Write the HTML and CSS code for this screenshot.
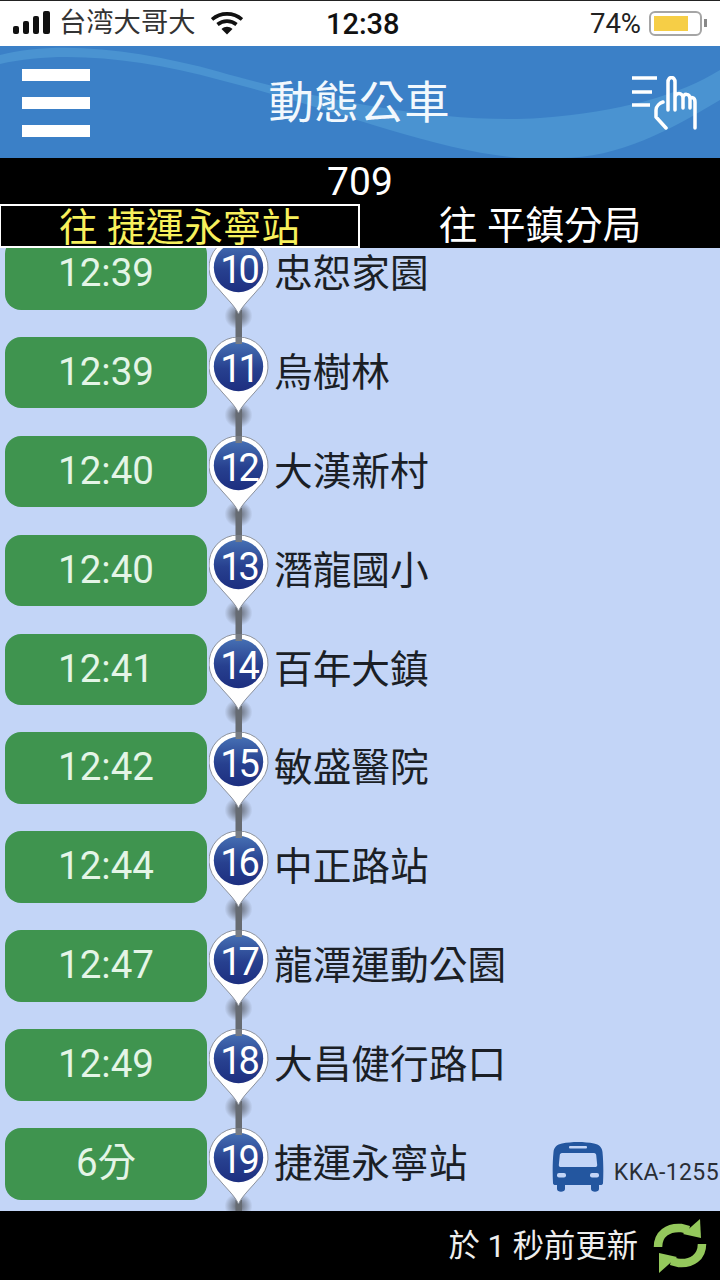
FILE: index.html
```html
<!DOCTYPE html>
<html lang="zh-Hant">
<head>
  <meta charset="UTF-8" />
  <meta name="viewport" content="width=device-width, initial-scale=1.0"/>
  <title>動態公車</title>
  <link rel="stylesheet" href="styles.css">
</head>
<body>
  <svg class="defs" width="0" height="0">
    <defs>
      <linearGradient id="pin-blue" x1="0" y1="0" x2="0" y2="1">
        <stop offset="0" stop-color="#4670b4"/>
        <stop offset="0.55" stop-color="#27408f"/>
        <stop offset="1" stop-color="#1d2f80"/>
      </linearGradient>
      <radialGradient id="pin-shadow">
        <stop offset="0" stop-color="#333" stop-opacity="0.7"/>
        <stop offset="0.6" stop-color="#333" stop-opacity="0.3"/>
        <stop offset="1" stop-color="#333" stop-opacity="0"/>
      </radialGradient>
      <g id="pin-body">
        <ellipse cx="29.5" cy="78" rx="14" ry="13" fill="url(#pin-shadow)"/>
        <rect x="26.5" y="72" width="6.5" height="38" fill="#666b72"/>
        <path d="M29.5 76 C26 68 17 60 10.500 52 A29.500 29.500 0 1 1 48.500 52 C42 60 33 68 29.5 76Z" fill="#fff" stroke="#8b919c" stroke-width="1"/>
        <circle cx="29.5" cy="29.5" r="24.7" fill="url(#pin-blue)"/>
        <rect x="26.5" y="0" width="6.5" height="7" fill="#777c84"/>
      </g>
    </defs>
  </svg>

  <div class="status-bar">
    <div class="status-left">
      <svg class="signal" width="38" height="24" viewBox="0 0 38 24">
        <rect x="0" y="15" width="6" height="8" rx="2"/>
        <rect x="10" y="10" width="6" height="13" rx="2"/>
        <rect x="20" y="5" width="6" height="18" rx="2"/>
        <rect x="30" y="0" width="7" height="23" rx="2"/>
      </svg>
      <span class="carrier">台湾大哥大</span>
      <svg class="wifi" width="32" height="24" viewBox="0 0 32 24">
        <path d="M1 8.5C9.500 1 22.500 1 31 8.500" fill="none" stroke="#111" stroke-width="3.600"/>
        <path d="M6.500 13.500C12 9 20 9 25.500 13.500" fill="none" stroke="#111" stroke-width="3.600"/>
        <path d="M10.500 18L16 23.500 21.500 18C18 15 14 15 10.500 18Z" fill="#111"/>
      </svg>
    </div>
    <span class="clock">12:38</span>
    <div class="status-right">
      <span class="percent">74%</span>
      <div class="battery"><div class="battery-fill"></div></div>
      <div class="battery-nub"></div>
    </div>
  </div>

  <header class="app-header">
    <svg class="header-wave" width="720" height="112" viewBox="0 46 720 112">
      <path d="M0 55C60 40 140 50 220 72C300 95 440 125 540 118C620 112 680 95 720 70L720 100C670 130 620 158 560 158L520 158C430 150 340 110 220 80C140 58 60 50 0 64Z" fill="#4a93d1"/>
    </svg>
    <button class="menu-btn" aria-label="menu">
      <span></span><span></span><span></span>
    </button>
    <h1 class="title">動態公車</h1>
    <svg class="hand-icon" width="68" height="56" viewBox="630 76 68 56" fill="none" stroke="#fff" stroke-width="3.500" stroke-linecap="round" stroke-linejoin="round">
      <path d="M632 78H657M632 92H652M632 105H650" stroke-width="3.500" stroke-linecap="butt"/>
      <path d="M666 128L656 117V110C656 106 660 103 663 102M668 110V82C668 76 675 76 675 82V110M675 98C675 92 683 92 683 98V108M683 98C683 93 690 93 690 99V108M690 100C690 96 695 97 695 102V128"/>
    </svg>
  </header>

  <div class="route-bar">
    <div class="route-no">709</div>
    <div class="tabs">
      <div class="tab tab-active">往 捷運永寧站</div>
      <div class="tab">往 平鎮分局</div>
    </div>
  </div>

  <main class="stop-list">
    <div class="stop-rows">
      <div class="stop"><div class="eta">12:39</div><svg class="pin" width="60" height="110" viewBox="0 0 60 110"><use href="#pin-body"/><text x="29.500" y="44.500">10</text></svg><div class="stop-name">忠恕家園</div></div>
      <div class="stop"><div class="eta">12:39</div><svg class="pin" width="60" height="110" viewBox="0 0 60 110"><use href="#pin-body"/><text x="29.500" y="44.500">11</text></svg><div class="stop-name">烏樹林</div></div>
      <div class="stop"><div class="eta">12:40</div><svg class="pin" width="60" height="110" viewBox="0 0 60 110"><use href="#pin-body"/><text x="29.500" y="44.500">12</text></svg><div class="stop-name">大漢新村</div></div>
      <div class="stop"><div class="eta">12:40</div><svg class="pin" width="60" height="110" viewBox="0 0 60 110"><use href="#pin-body"/><text x="29.500" y="44.500">13</text></svg><div class="stop-name">潛龍國小</div></div>
      <div class="stop"><div class="eta">12:41</div><svg class="pin" width="60" height="110" viewBox="0 0 60 110"><use href="#pin-body"/><text x="29.500" y="44.500">14</text></svg><div class="stop-name">百年大鎮</div></div>
      <div class="stop"><div class="eta">12:42</div><svg class="pin" width="60" height="110" viewBox="0 0 60 110"><use href="#pin-body"/><text x="29.500" y="44.500">15</text></svg><div class="stop-name">敏盛醫院</div></div>
      <div class="stop"><div class="eta">12:44</div><svg class="pin" width="60" height="110" viewBox="0 0 60 110"><use href="#pin-body"/><text x="29.500" y="44.500">16</text></svg><div class="stop-name">中正路站</div></div>
      <div class="stop"><div class="eta">12:47</div><svg class="pin" width="60" height="110" viewBox="0 0 60 110"><use href="#pin-body"/><text x="29.500" y="44.500">17</text></svg><div class="stop-name">龍潭運動公園</div></div>
      <div class="stop"><div class="eta">12:49</div><svg class="pin" width="60" height="110" viewBox="0 0 60 110"><use href="#pin-body"/><text x="29.500" y="44.500">18</text></svg><div class="stop-name">大昌健行路口</div></div>
      <div class="stop">
        <div class="eta">6分</div>
        <svg class="pin" width="60" height="110" viewBox="0 0 60 110"><use href="#pin-body"/><text x="29.500" y="44.500">19</text></svg>
        <div class="stop-name">捷運永寧站</div>
        <div class="bus">
          <svg width="52" height="50" viewBox="0 0 52 50">
            <path fill-rule="evenodd" fill="#23569f" d="M10 1.500C20 -0.500 32 -0.500 42 1.500C47 2.500 50 5 50.500 10C51.500 20 51.500 32 51 41C51 42.500 50 43 48.500 43H47V47C47 50.500 39 50.500 39 47V43H13V47C13 50.500 5 50.500 5 47V43H3.500C2 43 1 42.500 1 41C0.500 32 0.500 20 1.500 10C2 5 5 2.500 10 1.500ZM10 11C8.500 11 8 12 7.800 13L6.800 23C6.800 24.500 7.500 25 9 25H43C44.500 25 45.200 24.500 45.200 23L44.200 13C44 12 43.500 11 42 11Z"/>
            <rect x="17" y="4" width="18" height="2.500" rx="1" fill="#c3d5f7"/>
            <rect x="5" y="31" width="9" height="4.500" rx="2" fill="#c3d5f7"/>
            <rect x="38" y="31" width="9" height="4.500" rx="2" fill="#c3d5f7"/>
          </svg>
          <span class="plate">KKA-1255</span>
        </div>
      </div>
    </div>
  </main>

  <footer class="update-bar">
    <span class="update-text">於 1 秒前更新</span>
    <svg class="refresh" width="54" height="54" viewBox="0 0 54 54" fill="none">
      <path d="M5 28C5 15 15 8 28 9L36 11" stroke="#94c85c" stroke-width="8.500"/>
      <path d="M30 15L47 0 48 19Z" fill="#94c85c"/>
      <path d="M49 25C49 38 39 45 26 44L18 42" stroke="#94c85c" stroke-width="8.500"/>
      <path d="M24 38L6 54 6 34Z" fill="#94c85c"/>
    </svg>
  </footer>
</body>
</html>
```

FILE: styles.css
```css
* {
  box-sizing: border-box;
}

body {
  margin: 0;
  width: 720px;
  height: 1280px;
  display: flex;
  flex-direction: column;
  overflow: hidden;
  background: #000;
  font-family: Roboto, "Noto Sans CJK TC", sans-serif;
}

.defs {
  position: absolute;
}

/* status bar */
.status-bar {
  height: 46px;
  flex: none;
  display: flex;
  align-items: center;
  justify-content: space-between;
  padding: 1px 13px 2px 13px;
  border-top: 1px solid #222;
  background: #fff;
  color: #222;
  position: relative;
}

.status-left,
.status-right {
  display: flex;
  align-items: center;
}

.signal {
  fill: #111;
}

.carrier {
  font-size: 27.3px;
  line-height: 36px;
  margin-left: 8px;
  color: #333;
}

.wifi {
  margin-left: 16px;
}

.clock {
  font-size: 29px;
  font-weight: 500;
  color: #111;
  position: absolute;
  left: 326px;
  top: 6px;
}

.percent {
  font-size: 27.5px;
}

.battery {
  width: 53px;
  height: 25px;
  margin-left: 8px;
  padding: 3px;
  border: 2px solid #a5a5a5;
  border-radius: 6px;
}

.battery-fill {
  width: 34px;
  height: 100%;
  background: #f6ce46;
}

.battery-nub {
  width: 3px;
  height: 8px;
  margin-left: 2px;
  background: #888;
}

/* blue header */
.app-header {
  height: 112px;
  flex: none;
  display: flex;
  align-items: center;
  justify-content: center;
  background: #3b80c7;
  position: relative;
  overflow: hidden;
}

.header-wave {
  position: absolute;
  left: 0;
  top: 0;
}

.menu-btn {
  position: absolute;
  left: 22px;
  top: 23px;
  width: 68px;
  height: 68px;
  padding: 0;
  border: none;
  background: none;
  display: flex;
  flex-direction: column;
  justify-content: space-between;
}

.menu-btn span {
  height: 12px;
  background: #fff;
}

.title {
  margin: 0 2px 7px 0;
  font-size: 45.3px;
  font-weight: 400;
  color: #f2f8fd;
  position: relative;
}

.hand-icon {
  position: absolute;
  left: 630px;
  top: 30px;
}

/* route name and direction tabs */
.route-bar {
  height: 90px;
  flex: none;
  background: #000;
  color: #fff;
}

.route-no {
  height: 46px;
  font-size: 39px;
  line-height: 48px;
  text-align: center;
}

.tabs {
  display: flex;
  height: 44px;
}

.tab {
  width: 360px;
  font-size: 38.6px;
  line-height: 43px;
  text-align: center;
  white-space: nowrap;
}

.tab-active {
  width: 360px;
  border: 2px solid #fff;
  border-left-width: 1px;
  color: #f7f05c;
}

/* stops */
.stop-list {
  flex: 1;
  min-height: 0;
  overflow: hidden;
  background: #c3d5f7;
}

.stop-rows {
  margin-top: -10px;
}

.stop {
  height: 98.9px;
  padding-left: 5px;
  display: flex;
  align-items: flex-start;
}

.eta {
  width: 202px;
  height: 71.5px;
  flex: none;
  border-radius: 16px;
  background: #3f944f;
  color: #e4f5e7;
  font-size: 38.5px;
  font-weight: 400;
  line-height: 70px;
  text-align: center;
}

.pin {
  flex: none;
  margin-left: 2px;
}

.pin text {
  font-size: 38px;
  letter-spacing: -3px;
  fill: #fff;
  text-anchor: middle;
}

.stop-name {
  margin-left: 5px;
  font-size: 38.7px;
  line-height: 71px;
  color: #1b1f26;
  white-space: nowrap;
}

.bus {
  margin-left: auto;
  margin-top: 14px;
  display: flex;
  align-items: center;
  gap: 10px;
  padding-right: 1px;
}

.plate {
  margin-top: 12px;
  font-size: 23px;
  letter-spacing: 0.4px;
  line-height: 28px;
  color: #2a2e35;
}

/* footer */
.update-bar {
  height: 69px;
  flex: none;
  display: flex;
  align-items: center;
  justify-content: flex-end;
  gap: 15px;
  padding-right: 13px;
  background: #000;
  position: relative;
}

.update-text {
  margin-bottom: 4px;
  font-size: 31.3px;
  color: #eee;
  white-space: nowrap;
}
```
